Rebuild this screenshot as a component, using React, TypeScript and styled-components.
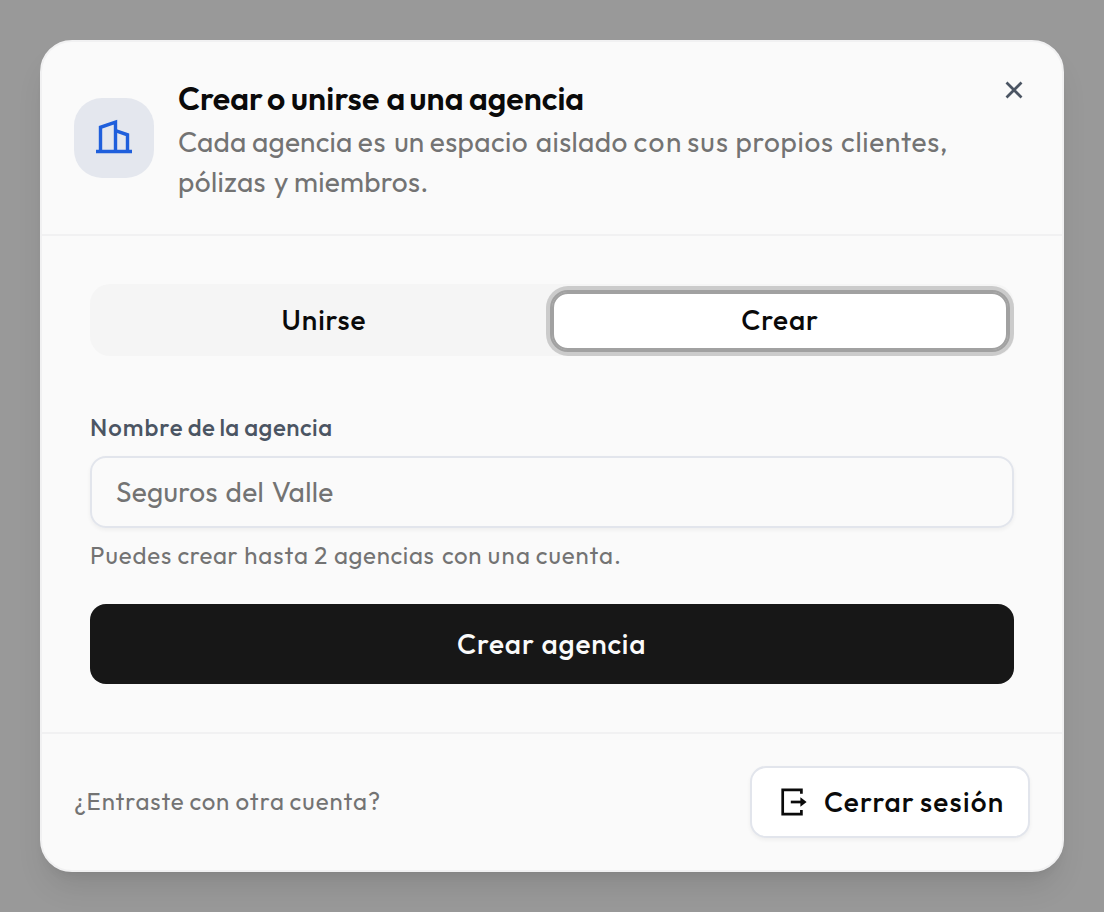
import React from "react";
import styled, { createGlobalStyle } from "styled-components";

const GlobalStyle = createGlobalStyle`
  *, *::before, *::after { box-sizing: border-box; }
  html, body { margin: 0; padding: 0; background: #999999; }
  body, button, input {
    font-family: "Outfit", "Lato", sans-serif;
  }
`;

const Viewport = styled.div`
  width: 1104px;
  height: 912px;
  overflow: hidden;
`;

const Backdrop = styled.div`
  width: 552px;
  height: 456px;
  padding: 20px;
  background: #999999;
  transform: scale(2);
  transform-origin: 0 0;
`;

const Dialog = styled.section`
  position: relative;
  height: 416px;
  display: flex;
  flex-direction: column;
  background: #fafafa;
  border: 1px solid #f1f1f2;
  border-radius: 16px;
  box-shadow: 0 10px 15px -3px rgba(0, 0, 0, 0.1), 0 4px 6px -4px rgba(0, 0, 0, 0.1);
`;

const Header = styled.header`
  display: flex;
  align-items: center;
  gap: 12px;
  height: 97px;
  padding: 16px;
  border-bottom: 1px solid #f1f1f2;
`;

const IconTile = styled.div`
  flex: none;
  width: 40px;
  height: 40px;
  border-radius: 14px;
  background: #e4e7ee;
  svg { display: block; }
`;

const Heading = styled.div`
  flex: 1;
`;

const Line = styled.span`
  display: flex;
  white-space: pre;
`;

const Word = styled.span<{ $advance: number; $tracking: number }>`
  flex: none;
  width: ${(p) => p.$advance}px;
  letter-spacing: ${(p) => p.$tracking}px;
`;

const Title = styled.h2`
  margin: 0;
  font-size: 16px;
  line-height: 24px;
  font-weight: 600;
  color: #0a0a0a;
`;

const Description = styled.p`
  margin: 0;
  font-size: 14px;
  line-height: 20px;
  color: #737373;
`;

const CloseButton = styled.button`
  position: absolute;
  top: 16px;
  right: 16px;
  width: 16px;
  height: 16px;
  padding: 0;
  border: 0;
  background: none;
  svg { display: block; }
`;

const Body = styled.div`
  flex: 1;
  display: flex;
  flex-direction: column;
  padding: 24px;
`;

const Tabs = styled.div`
  display: flex;
  height: 36px;
  padding: 4px 3px 3px;
  margin-bottom: 28px;
  border-radius: 10px;
  background: #f5f5f5;
`;

const Tab = styled.button<{ $active?: boolean }>`
  flex: 1;
  padding: 0 0 2px;
  font-size: 14px;
  font-weight: 500;
  line-height: 20px;
  letter-spacing: 0.45px;
  color: #0a0a0a;
  border: 1px solid ${(p) => (p.$active ? "#a1a1a1" : "transparent")};
  border-radius: 8px;
  background: ${(p) => (p.$active ? "#ffffff" : "transparent")};
  outline: ${(p) => (p.$active ? "1px solid #a1a1a1" : "none")};
  box-shadow: ${(p) => (p.$active ? "0 0 0 3px #cbcbcb" : "none")};
`;

const Label = styled.label`
  height: 16px;
  margin-bottom: 6px;
  font-size: 12px;
  line-height: 16px;
  font-weight: 500;
  color: #4b5563;
`;

const Input = styled.input`
  height: 36px;
  width: 100%;
  flex: none;
  padding: 0 12px;
  font-size: 14px;
  letter-spacing: 0.15px;
  word-spacing: 0.85px;
  color: #0a0a0a;
  background: transparent;
  border: 1px solid #e2e5ec;
  border-radius: 8px;
  box-shadow: 0 1px 2px rgba(0, 0, 0, 0.05);
  outline: none;
  &::placeholder { color: #737373; opacity: 1; }
`;

const Hint = styled.p`
  margin: 6px 0 16px;
  font-size: 12px;
  line-height: 16px;
  color: #737373;
`;

const SubmitButton = styled.button`
  display: flex;
  align-items: center;
  justify-content: center;
  height: 40px;
  flex: none;
  border: 0;
  border-radius: 8px;
  background: #171717;
  color: #fafafa;
  font-size: 14px;
  font-weight: 500;
  line-height: 20px;
  text-align: left;
`;

const Footer = styled.footer`
  display: flex;
  align-items: center;
  justify-content: space-between;
  height: 69px;
  padding: 0 16px;
  border-top: 1px solid #f1f1f2;
`;

const FooterText = styled.span`
  font-size: 12px;
  line-height: 16px;
  color: #737373;
`;

const OutlineButton = styled.button`
  display: flex;
  align-items: center;
  height: 36px;
  padding: 0 12px;
  gap: 8px;
  border: 1px solid #e2e5ec;
  border-radius: 8px;
  background: #ffffff;
  box-shadow: 0 1px 2px rgba(0, 0, 0, 0.05);
  color: #0a0a0a;
  font-size: 14px;
  font-weight: 500;
  line-height: 20px;
  text-align: left;
`;

type SpacedWord = [text: string, advance: number, tracking: number];

const SpacedText = ({ words }: { words: SpacedWord[] }) => (
  <Line>
    {words.map(([text, advance, tracking], i) => (
      <Word key={i} $advance={advance} $tracking={tracking}>
        {i < words.length - 1 ? text + " " : text}
      </Word>
    ))}
  </Line>
);

const TITLE: SpacedWord[] = [
  ["Crear", 44.5, 0],
  ["o", 12, 0],
  ["unirse", 47.75, 0.1],
  ["a", 11.5, 0],
  ["una", 29.75, 0.1],
  ["agencia", 58, 0],
];

const DESCRIPTION_1: SpacedWord[] = [
  ["Cada", 37, 0.1],
  ["agencia", 52.9, 0.1],
  ["es", 18.25, 0.4],
  ["un", 17.75, 0],
  ["espacio", 53, 0.2],
  ["aislado", 48.9, 0.2],
  ["con", 26.8, 0.8],
  ["sus", 24.2, 0.6],
  ["propios", 52.75, 0.35],
  ["clientes,", 54, 0.35],
];

const DESCRIPTION_2: SpacedWord[] = [
  ["pólizas", 48, 0.2],
  ["y", 10, 0],
  ["miembros.", 68, 0.13],
];

const LABEL: SpacedWord[] = [
  ["Nombre", 48.9, 0.5],
  ["de", 15.9, 0.1],
  ["la", 12.3, 0.1],
  ["agencia", 45, 0.25],
];

const HINT: SpacedWord[] = [
  ["Puedes", 43.7, 0.45],
  ["crear", 33.4, 0.3],
  ["hasta", 35.1, 0.5],
  ["2", 9.8, 0],
  ["agencias", 54, 0.33],
  ["con", 22.9, 0.3],
  ["una", 24, 0.7],
  ["cuenta.", 43.8, 0.48],
];

const SUBMIT: SpacedWord[] = [
  ["Crear", 42.25, 0.45],
  ["agencia", 52.75, 0.4],
];

const FOOTER: SpacedWord[] = [
  ["¿Entraste", 57.8, 0.44],
  ["con", 23, 0.35],
  ["otra", 27, 0.5],
  ["cuenta?", 46, 0.5],
];

const SIGN_OUT: SpacedWord[] = [
  ["Cerrar", 48, 0.55],
  ["sesión", 42, 0.65],
];

const BuildingIcon = () => (
  <svg width="40" height="40" viewBox="0 0 80 80" fill="none" stroke="#1f5fdc" strokeWidth="3.4">
    <path d="M22 53.5H58" />
    <path d="M26.5 53V29.3L41.5 24.2V53" />
    <path d="M41.5 32.7L53.5 36.8V53" />
  </svg>
);

const CloseIcon = () => (
  <svg width="16" height="16" viewBox="0 0 32 32" fill="none" stroke="#4b5563" strokeWidth="2.7">
    <path d="M8.5 8.5L23.5 23.5M23.5 8.5L8.5 23.5" />
  </svg>
);

const SignOutIcon = () => (
  <svg width="16" height="16" viewBox="0 0 32 32" fill="none" stroke="#0a0a0a" strokeWidth="2.7">
    <path d="M25.4 7.8V3.8H6.7V28.2H25.4V24" />
    <path d="M14.8 16H25" />
    <path d="M24.4 11.2V20.8L30.6 16Z" fill="#0a0a0a" stroke="none" />
  </svg>
);

export default function App() {
  return (
    <Viewport>
      <GlobalStyle />
      <Backdrop>
        <Dialog role="dialog" aria-labelledby="agency-title">
          <Header>
            <IconTile><BuildingIcon /></IconTile>
            <Heading>
              <Title id="agency-title"><SpacedText words={TITLE} /></Title>
              <Description>
                <SpacedText words={DESCRIPTION_1} />
                <SpacedText words={DESCRIPTION_2} />
              </Description>
            </Heading>
          </Header>
          <CloseButton aria-label="Cerrar"><CloseIcon /></CloseButton>
          <Body>
            <Tabs role="tablist">
              <Tab role="tab">Unirse</Tab>
              <Tab role="tab" $active>Crear</Tab>
            </Tabs>
            <Label htmlFor="agency-name"><SpacedText words={LABEL} /></Label>
            <Input id="agency-name" placeholder="Seguros del Valle" />
            <Hint><SpacedText words={HINT} /></Hint>
            <SubmitButton><SpacedText words={SUBMIT} /></SubmitButton>
          </Body>
          <Footer>
            <FooterText><SpacedText words={FOOTER} /></FooterText>
            <OutlineButton><SignOutIcon /><SpacedText words={SIGN_OUT} /></OutlineButton>
          </Footer>
        </Dialog>
      </Backdrop>
    </Viewport>
  );
}
